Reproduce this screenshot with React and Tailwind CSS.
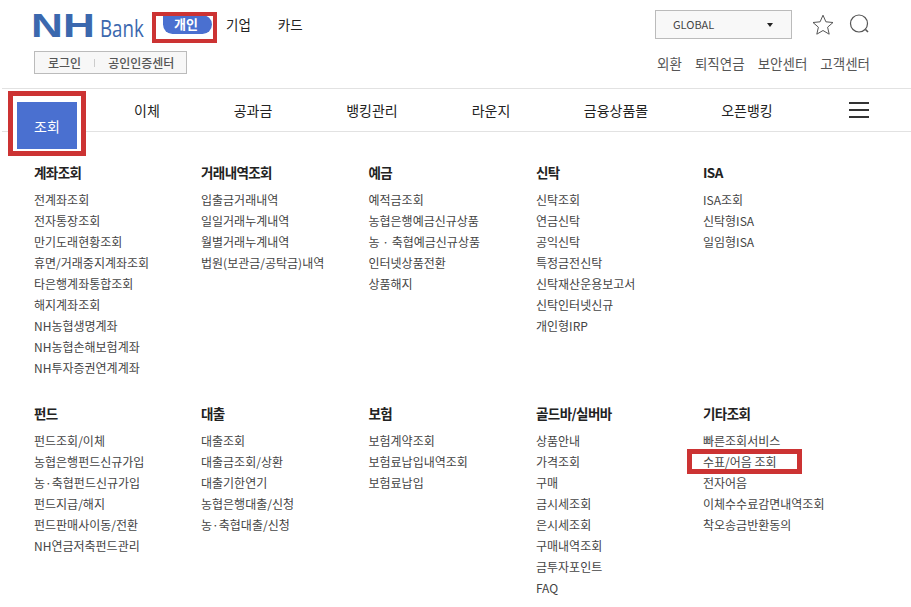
const groupsTop = [
  { title: "계좌조회", items: ["전계좌조회", "전자통장조회", "만기도래현황조회", "휴면/거래중지계좌조회", "타은행계좌통합조회", "해지계좌조회", "NH농협생명계좌", "NH농협손해보험계좌", "NH투자증권연계계좌"] },
  { title: "거래내역조회", items: ["입출금거래내역", "일일거래누계내역", "월별거래누계내역", "법원(보관금/공탁금)내역"] },
  { title: "예금", items: ["예적금조회", "농협은행예금신규상품", "농 · 축협예금신규상품", "인터넷상품전환", "상품해지"] },
  { title: "신탁", items: ["신탁조회", "연금신탁", "공익신탁", "특정금전신탁", "신탁재산운용보고서", "신탁인터넷신규", "개인형IRP"] },
  { title: "ISA", items: ["ISA조회", "신탁형ISA", "일임형ISA"] },
];

const groupsBottom = [
  { title: "펀드", items: ["펀드조회/이체", "농협은행펀드신규가입", "농·축협펀드신규가입", "펀드지급/해지", "펀드판매사이동/전환", "NH연금저축펀드관리"] },
  { title: "대출", items: ["대출조회", "대출금조회/상환", "대출기한연기", "농협은행대출/신청", "농·축협대출/신청"] },
  { title: "보험", items: ["보험계약조회", "보험료납입내역조회", "보험료납입"] },
  { title: "골드바/실버바", items: ["상품안내", "가격조회", "구매", "금시세조회", "은시세조회", "구매내역조회", "금투자포인트", "FAQ"] },
  { title: "기타조회", items: ["빠른조회서비스", "수표/어음 조회", "전자어음", "이체수수료감면내역조회", "착오송금반환동의"] },
];

const navItems = [
  { label: "이체", w: "w-[106px]" },
  { label: "공과금", w: "w-[106px]" },
  { label: "뱅킹관리", w: "w-[132px]" },
  { label: "라운지", w: "w-[106px]" },
  { label: "금융상품몰", w: "w-[144px]" },
  { label: "오픈뱅킹", w: "w-[118px]" },
];

const MenuGroup = ({ group }) => (
  <div className="relative">
    <h3 className="text-[13.5px] leading-[21px] font-bold text-[#222] tracking-[-0.6px]">{group.title}</h3>
    <ul className="mt-[6px]">
      {group.items.map((item) => (
        <li key={item} className="relative text-[12px] leading-[21px] text-[#444] whitespace-nowrap">
          {item}
          {/* red annotation box */}
          {item === "수표/어음 조회" && (
            <span className="absolute left-[-16px] top-[-2px] w-[115px] h-[25px] border-[5px] border-[#cc3333]"></span>
          )}
        </li>
      ))}
    </ul>
  </div>
);

const App = () => {
  return (
    <div
      className="relative w-[911px] h-[607px] overflow-hidden bg-white"
      style={{ fontFamily: '"Noto Sans CJK KR", "Noto Sans", sans-serif' }}
    >
      {/* Header */}
      <div className="flex justify-between h-[88px] pl-[34px] pr-[41px]">
        <div>
          <div className="flex items-start h-[51px]">
            <div className="flex items-baseline w-[110px] h-[40px] pt-[10px] leading-[30px] text-[#3b68ae]">
              <span
                className="inline-block shrink-0 w-[66px] -translate-x-[3px] origin-left scale-x-[1.3] text-[34px] font-bold"
                style={{ fontFamily: '"Liberation Sans", sans-serif' }}
              >
                NH
              </span>
              <span
                className="inline-block shrink-0 w-[44px] origin-left scale-x-[0.78] text-[24px] font-medium"
                style={{ fontFamily: '"Open Sans", sans-serif' }}
              >
                Bank
              </span>
            </div>
            <div className="relative flex items-start justify-center ml-[19px] mt-[15px] w-[49px] h-[19px] rounded-b-[10px] rounded-tr-[10px] bg-[#4a70d0] pt-[1px] text-[13px] font-bold leading-[15px] text-white">
              <span className="-ml-[3px]">개인</span>
              <span className="absolute left-[-11px] top-[-3px] w-[65px] h-[31px] border-[4px] border-[#cc3333]"></span>
            </div>
            <span className="ml-[14px] mt-[14px] text-[13.5px] leading-[20px] text-[#222]">기업</span>
            <span className="ml-[27px] mt-[14px] text-[13.5px] leading-[20px] text-[#222]">카드</span>
          </div>
          <div className="flex items-center w-[153px] h-[23px] border border-[#bbb] bg-[#f7f7f7] text-[12px] font-medium text-[#555]">
            <span className="ml-[13px]">로그인</span>
            <span className="mx-[13px] w-px h-[8px] bg-[#ccc]"></span>
            <span>공인인증센터</span>
          </div>
        </div>
        <div className="flex flex-col items-end">
          <div className="flex items-center mt-[10px] h-[29px]">
            <div className="flex items-center justify-between w-[137px] h-[29px] border border-[#bbb] bg-[#f8f8f8] pl-[17px] pr-[18px] text-[11px] text-[#444]">
              GLOBAL
              <span className="w-0 h-0 border-x-[3.5px] border-x-transparent border-t-[4px] border-t-[#222]"></span>
            </div>
            <svg className="ml-[20px] w-[22px] h-[22px] text-[#555]" viewBox="0 0 22 22" fill="none" stroke="currentColor" strokeWidth="1">
              <path d="M11 1.2l2.9 6.6 7.1.7-5.4 4.7 1.6 7-6.2-3.700-6.2 3.700 1.6-7L1 8.500l7.100-.7z" strokeLinejoin="round" />
            </svg>
            <svg className="ml-[15px] w-[21px] h-[21px] text-[#555]" viewBox="0 0 21 21" fill="none" stroke="currentColor">
              <circle cx="10" cy="9.500" r="8.500" strokeWidth="1.200" />
              <path d="M16.500 15.500l2.500 2.500" strokeWidth="1.600" />
            </svg>
          </div>
          <div className="flex gap-[13px] mt-[14px] text-[13.5px] leading-[20px] text-[#555]">
            <span>외환</span>
            <span>퇴직연금</span>
            <span>보안센터</span>
            <span>고객센터</span>
          </div>
        </div>
      </div>

      {/* Main nav */}
      <nav className="relative flex items-center h-[44px] ml-[2px] border-y border-[#e2e2e2]">
        <div className="flex items-center pl-[92px] text-[14px] text-[#222]">
          {navItems.map((item) => (
            <span key={item.label} className={`${item.w} text-center`}>{item.label}</span>
          ))}
        </div>
        <div className="ml-[43px] flex flex-col gap-[5px] w-[20px]">
          <span className="h-[2px] bg-[#333]"></span>
          <span className="h-[2px] bg-[#333]"></span>
          <span className="h-[2px] bg-[#333]"></span>
        </div>
        {/* active tab with red annotation box */}
        <div className="absolute left-[6px] top-[2px] w-[78px] h-[65px] border-[5px] border-[#cc3333] bg-white px-[4px] pt-[6px] pb-[2px]">
          <div className="flex items-center justify-center h-full bg-[#4a70d0] pt-[2px] text-[14px] text-white">조회</div>
        </div>
      </nav>

      {/* Mega menu */}
      <div className="pl-[34px] pt-[30px]">
        <div className="grid grid-cols-[167px_167.5px_167.5px_167px_1fr] h-[241px]">
          {groupsTop.map((group) => (
            <MenuGroup key={group.title} group={group} />
          ))}
        </div>
        <div className="grid grid-cols-[167px_167.5px_167.5px_167px_1fr]">
          {groupsBottom.map((group) => (
            <MenuGroup key={group.title} group={group} />
          ))}
        </div>
      </div>
    </div>
  );
};

export default App;
